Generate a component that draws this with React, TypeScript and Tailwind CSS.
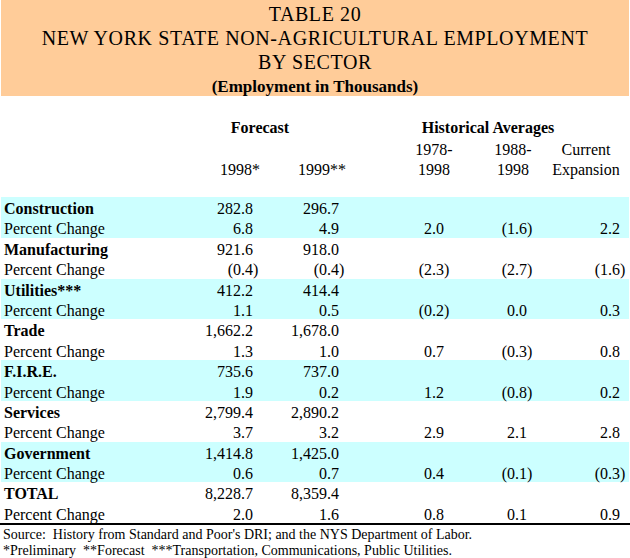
import React from "react";

type Row = { label: string; v: string[]; p: string[]; shade?: boolean };

const rows: Row[] = [
  { label: "Construction", v: ["282.8", "296.7"], p: ["6.8", "4.9", "2.0", "(1.6)", "2.2"], shade: true },
  { label: "Manufacturing", v: ["921.6", "918.0"], p: ["(0.4)", "(0.4)", "(2.3)", "(2.7)", "(1.6)"] },
  { label: "Utilities***", v: ["412.2", "414.4"], p: ["1.1", "0.5", "(0.2)", "0.0", "0.3"], shade: true },
  { label: "Trade", v: ["1,662.2", "1,678.0"], p: ["1.3", "1.0", "0.7", "(0.3)", "0.8"] },
  { label: "F.I.R.E.", v: ["735.6", "737.0"], p: ["1.9", "0.2", "1.2", "(0.8)", "0.2"], shade: true },
  { label: "Services", v: ["2,799.4", "2,890.2"], p: ["3.7", "3.2", "2.9", "2.1", "2.8"] },
  { label: "Government", v: ["1,414.8", "1,425.0"], p: ["0.6", "0.7", "0.4", "(0.1)", "(0.3)"], shade: true },
  { label: "TOTAL", v: ["8,228.7", "8,359.4"], p: ["2.0", "1.6", "0.8", "0.1", "0.9"] },
];

function Num({ s }: { s?: string }) {
  if (!s) return <div />;
  const neg = s.startsWith("(");
  return (
    <div className="text-right whitespace-nowrap">
      {neg ? s.slice(0, -1) : s}
      <span className="inline-block w-[7px] text-left">{neg ? ")" : ""}</span>
    </div>
  );
}

const grid = "grid grid-cols-[199px_60px_86px_105px_83px_93px] items-center h-[20.4px]";

export default function App() {
  return (
    <div className="w-[630px] h-[558px] bg-white text-black font-['Liberation_Serif',serif] overflow-hidden">
      <div className="mx-[1px] h-[96px] bg-[#ffcc99] pt-[2px] text-center">
        <div className="text-[20px] leading-[24px] tracking-[0.6px]">TABLE 20</div>
        <div className="text-[20px] leading-[24px] tracking-[0.6px] whitespace-nowrap">
          NEW YORK STATE NON-AGRICULTURAL EMPLOYMENT
        </div>
        <div className="text-[20px] leading-[24px] tracking-[0.6px]">BY SECTOR</div>
        <div className="mt-[2px] text-[17px] leading-[22px] font-bold">(Employment in Thousands)</div>
      </div>

      <div className="px-[1px] pt-[22px] text-[16px]">
        <div className="flex h-[20px] items-center font-bold whitespace-nowrap">
          <div className="w-[199px]" />
          <div className="w-[120px] text-center">Forecast</div>
          <div className="w-[98px]" />
          <div className="w-[140px] text-center">Historical Averages</div>
        </div>
        <div className="mt-[2px] flex h-[20px] items-center whitespace-nowrap">
          <div className="w-[399px]" />
          <div className="w-[68px] text-center">1978-</div>
          <div className="w-[14px]" />
          <div className="w-[62px] text-center">1988-</div>
          <div className="w-[84px] text-center">Current</div>
        </div>
        <div className="flex h-[20px] items-center whitespace-nowrap">
          <div className="w-[199px]" />
          <div className="w-[60px] text-right">1998*</div>
          <div className="w-[86px] text-right">1999**</div>
          <div className="w-[54px]" />
          <div className="w-[68px] text-center">1998</div>
          <div className="w-[14px]" />
          <div className="w-[62px] text-center">1998</div>
          <div className="w-[84px] text-center">Expansion</div>
        </div>

        <div className="mt-[17px]">
          {rows.map((r) => (
            <div key={r.label} className={r.shade ? "bg-[#ccffff]" : ""}>
              <div className={grid}>
                <div className="pl-[3px] font-bold whitespace-nowrap">{r.label}</div>
                <Num s={r.v[0]} />
                <Num s={r.v[1]} />
                <div />
                <div />
                <div />
              </div>
              <div className={grid}>
                <div className="pl-[3px] whitespace-nowrap">Percent Change</div>
                {r.p.map((x, i) => (
                  <Num key={i} s={x} />
                ))}
              </div>
            </div>
          ))}
        </div>
      </div>

      <div className="h-[2px] bg-black" />
      <div className="pl-[3px] pt-[2px] text-[14px] leading-[16px] whitespace-nowrap">
        <div>Source:&nbsp; History from Standard and Poor's DRI; and the NYS Department of Labor.</div>
        <div>*Preliminary&nbsp; **Forecast&nbsp; ***Transportation, Communications, Public Utilities.</div>
      </div>
    </div>
  );
}
